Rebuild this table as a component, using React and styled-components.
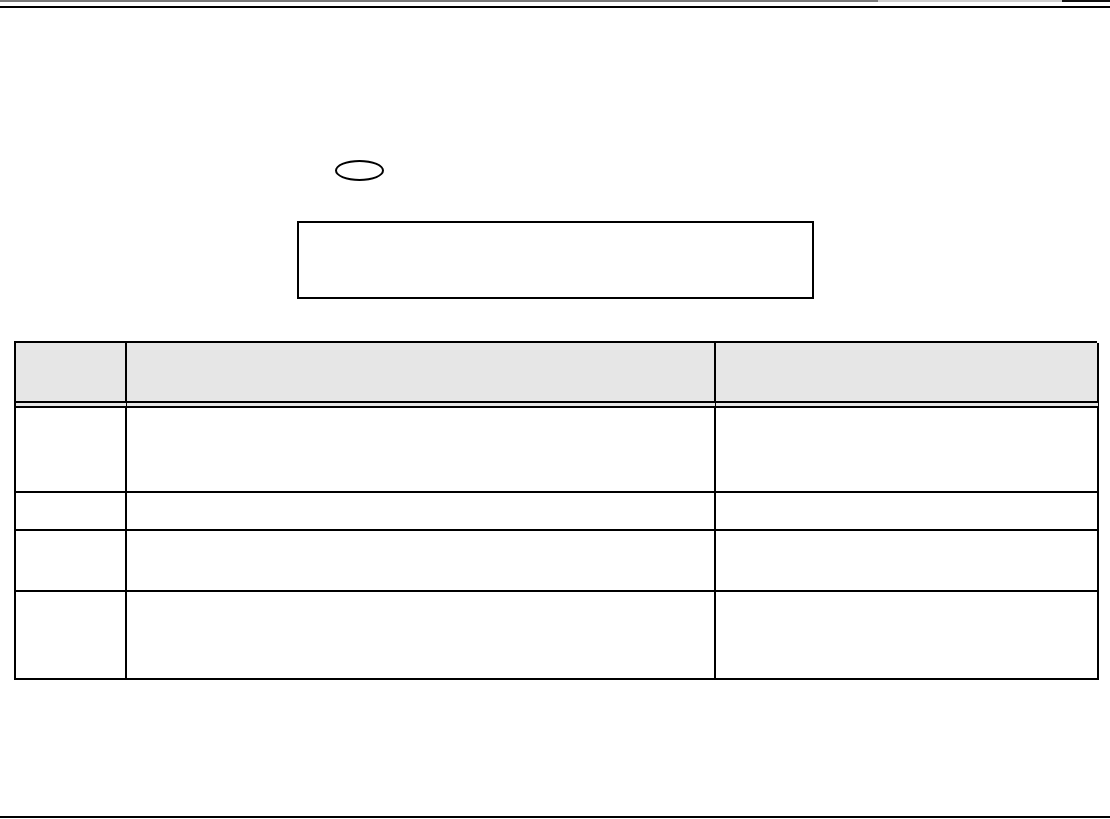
import React from "react";
import styled, { createGlobalStyle } from "styled-components";

const Global = createGlobalStyle`
  html, body { margin: 0; padding: 0; background: #fff; }
  body { font-family: "Liberation Sans", Arial, sans-serif; }
`;

const Page = styled.div`
  width: 1110px;
  height: 819px;
  display: flex;
  flex-direction: column;
  background: #fff;
  overflow: hidden;
`;

const TopStrip = styled.div`
  height: 2px;
  background: linear-gradient(
    to right,
    #7a7a7a 0 878px,
    #cfcfcf 878px 1062px,
    #111 1062px
  );
`;

const Rule = styled.div`
  height: 2px;
  background: #000;
  margin-top: ${(p) => p.$top || 0}px;
`;

const MarkRow = styled.div`
  display: flex;
  padding-left: 335px;
  margin-top: 152px;
`;

const Oval = styled.div`
  width: 49px;
  height: 21px;
  box-sizing: border-box;
  border: 2px solid #000;
  border-radius: 50%;
`;

const NoteRow = styled.div`
  display: flex;
  padding-left: 297px;
  margin-top: 40px;
`;

const NoteBox = styled.div`
  width: 517px;
  height: 78px;
  box-sizing: border-box;
  border: 2px solid #000;
`;

const Table = styled.div`
  margin: 42px 0 0 14px;
  width: 1083px;
  box-sizing: border-box;
  display: grid;
  grid-template-columns: 111px 589px 383px;
  border-left: 2px solid #000;
  border-top: 2px solid #000;
`;

const HeadCell = styled.div`
  height: 58px;
  background: #e6e6e6;
  border-right: 2px solid #000;
  border-bottom: 7px double #000;
`;

const Cell = styled.div`
  height: ${(p) => p.$h}px;
  border-right: 2px solid #000;
  border-bottom: 2px solid #000;
`;

const Spacer = styled.div`
  flex: 1;
`;

const rows = [83, 36, 59, 86];

export default function App() {
  return (
    <Page>
      <Global />
      <TopStrip />
      <Rule $top={4} />
      <MarkRow>
        <Oval />
      </MarkRow>
      <NoteRow>
        <NoteBox />
      </NoteRow>
      <Table>
        <HeadCell />
        <HeadCell />
        <HeadCell />
        {rows.map((h, i) => (
          <React.Fragment key={i}>
            <Cell $h={h} />
            <Cell $h={h} />
            <Cell $h={h} />
          </React.Fragment>
        ))}
      </Table>
      <Spacer />
      <Rule $top={0} />
      <div style={{ height: 1 }} />
    </Page>
  );
}
